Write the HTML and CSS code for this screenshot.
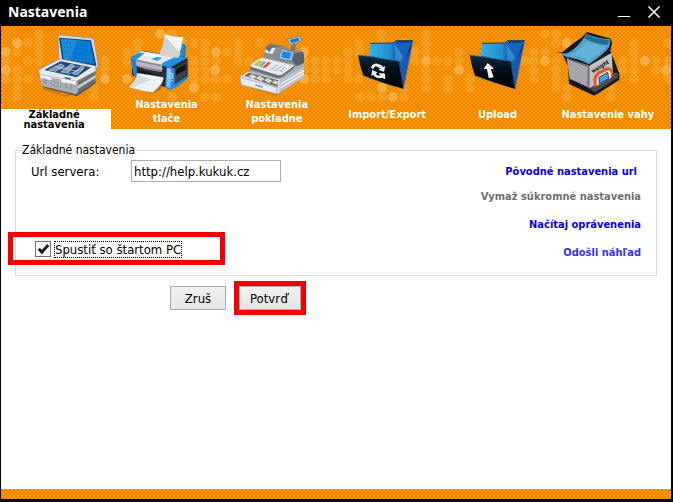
FILE: index.html
```html
<!DOCTYPE html>
<html lang="sk">
<head>
    <meta charset="UTF-8">
    <meta name="viewport" content="width=device-width, initial-scale=1.0">
    <title>Nastavenia</title>
    <link rel="stylesheet" href="styles.css">
</head>
<body>
    <div class="window">
        <header class="titlebar">
            <h1>Nastavenia</h1>
            <div class="window-buttons">
                <button type="button" aria-label="Minimalizovať">
                    <svg width="14" height="14" viewBox="0 0 14 14"><path d="M1 11.500h12" stroke="#fff" fill="none"/></svg>
                </button>
                <button type="button" aria-label="Zavrieť">
                    <svg width="14" height="14" viewBox="0 0 14 14"><path d="M1.500 1.500l11 11M12.500 1.500l-11 11" stroke="#fff" stroke-width="1.500" fill="none"/></svg>
                </button>
            </div>
        </header>

        <nav class="tabs">
            <svg class="dots" width="670" height="103" viewBox="1 26 670 103" aria-hidden="true">
                <path class="dim" d="M6 61h0M6 79h0M17 52h0M17 70h0M17 79h0M17 88h0M17 97h0M28 43h0M28 61h0M28 79h0M39 34h0M39 43h0M39 61h0M39 52h0M94 97h0M105 61h0M105 70h0M94 88h0M127 52h0M138 52h0M127 61h0M138 43h0M172 34h0M183 43h0M194 43h0M205 43h0M183 61h0M194 61h0M205 52h0M205 61h0M194 70h0M205 70h0M216 61h0M205 79h0M216 79h0M205 97h0M216 97h0M194 79h0M172 97h0M227 52h0M238 43h0M238 52h0M238 61h0M249 61h0M227 79h0M260 43h0M271 52h0M304 61h0M304 70h0M315 61h0M315 70h0M315 79h0M326 61h0M326 70h0M326 79h0M337 61h0M337 70h0M348 52h0M348 61h0M348 70h0M348 79h0M359 43h0M359 52h0M359 79h0M381 34h0M381 43h0M360 97h0M371 97h0M382 97h0M404 88h0M404 97h0M404 43h0M415 52h0M426 34h0M426 43h0M426 52h0M415 61h0M426 70h0M426 79h0M426 88h0M437 61h0M448 61h0M448 79h0M459 52h0M459 61h0M448 88h0M470 88h0M470 79h0M525 61h0M534 52h0M534 61h0M534 70h0M534 79h0M545 34h0M556 34h0M556 43h0M567 52h0M578 43h0M556 61h0M545 52h0M556 70h0M556 79h0M556 88h0M567 97h0M567 88h0M611 97h0M611 88h0M623 61h0M634 43h0M634 52h0M634 61h0M634 70h0M623 70h0M634 79h0M656 61h0M668 43h0M656 70h0M668 61h0M668 79h0"/>
                <path class="bright" d="M17 43h0M6 52h0M6 70h0M105 79h0M127 79h0M160 34h0M216 52h0M215 70h0M194 88h0M304 52h0M304 79h0M426 61h0M382 88h0M393 97h0M459 70h0M567 43h0M545 61h0M645 61h0M666 70h0"/>
            </svg>
            <a class="tab selected" href="#zakladne">
                <svg class="icon" viewBox="-42 0 240 216" aria-hidden="true">
                    <path d="M40 160l60 42 95-42-10 20-78 26-70-22z" fill="#9b6212" opacity=".5"/>
                    <path d="M84 27q0-6 7-6l93 9q7 1 8 6l13 77q0 8-9 7l-100-16q-8-2-9-10z" fill="#d6d9dd" stroke="#8d9399" stroke-width="2"/>
                    <path d="M90 29l93 8 16 74-2 3-100-17-10-68z" fill="#173f7c"/>
                    <path d="M94 32l86 8 14 68-93-14-9-59z" fill="#087bd1"/>
                    <path d="M94 32l48 4-22 60-19-2z" fill="#2396e0" opacity=".7"/>
                    <path d="M100 44l80 8M102 57l80 9M105 71l80 10M107 84l83 12" stroke="#0660ae" stroke-width="3" stroke-dasharray="4 6" opacity=".5"/>
                    <path d="M25 126l65-34 107 22 1 16-58 31-111-20z" fill="#e6e9ec" stroke="#858b92" stroke-width="2"/>
                    <path d="M43 126l49-26 91 18-43 30z" fill="#174b82"/>
                    <path d="M56 126l37-18 10 6-27 16zM92 132l30-23 11 3-19 23zM128 137l26-23 10 4-22 23zM74 115l67 15M84 123l62-8M112 139l49-17" fill="#8295a9" stroke="#c3cfda" stroke-width="2"/>
                    <path d="M28 138l111 20 58-30v32l-54 37q-5 3-12 1l-88-22q-8-3-10-10z" fill="#a9adb1"/>
                    <path d="M143 160l54-30v30l-54 37z" fill="#6c7074"/>
                    <path d="M29 140l109 20v10L32 151z" fill="#f0f1f2"/>
                    <path d="M143 173l54-32v8l-54 34z" fill="#c9cbcc"/>
                    <path d="M38 175l94 22q6 2 12-2l53-36v6l-56 40-94-25z" fill="#55585c"/>
                    <path d="M66 151l26 5v19l-26-6zM71 156v9l15 3v-9zM42 150v17M48 151v17M108 163v18M123 166v18" fill="#c9ccce" stroke="#74797e" stroke-width="2"/>
                    <path d="M104 149l18 4" stroke="#36577e" stroke-width="4"/>
                </svg>
                <span class="label">Základné nastavenia</span>
            </a>
            <a class="tab" href="#tlac">
                <svg class="icon" viewBox="20 0 240 216" aria-hidden="true">
                    <path d="M177 55l14-6q6 0 7 6l-2 31-30 14z" fill="#168fe0" stroke="#0b579b" stroke-width="2"/>
                    <path d="M38 87l28-16q4-2 9-1l121 16q9 2 9 8v48q0 6-6 9l-45 28q-4 3-10 1l-106-38z" fill="#2a2c31"/>
                    <path d="M37 85l30-15 54 7 80 13-51 26-38-6-73-16z" fill="#e6e8ec"/>
                    <path d="M37 85l22-11 18 2-29 21-11-3zM129 105l49-23 25 8-50 28-26-5z" fill="#1c91e5"/>
                    <path d="M65 82l14-7 53 9-12 8z" fill="#f8f9fa"/>
                    <path d="M96 93l16-7 17 3-15 10z" fill="#2ba5ec"/>
                    <path d="M137 18q27 12 56 8-7 35-17 63l-56-9q13-29 17-62z" fill="#f3f4f4" stroke="#a5a9ad"/>
                    <path d="M139 27l45 50-8 12-55-9z" fill="#cfd3d6"/>
                    <path d="M36 88q28 12 92 22v22Q72 126 44 111z" fill="#8d8993"/>
                    <path d="M46 99l83 17v10L48 112z" fill="#bbb7bf"/>
                    <path d="M36 88q-3 4-1 11l7 38q2 8 12 9l-4-50q-8-1-14-8z" fill="#2180de"/>
                    <path d="M53 124l83 23v16l-83-27z" fill="#111318"/>
                    <path d="M142 115l18 4q8 3 8 10v51l-18 6q-8-3-13-8z" fill="#2b88e6"/>
                    <path d="M143 119l12 4-2 57-11-4z" fill="#82c1f5"/>
                    <path d="M152 134l8 2v15l-8-2zM152 158h9" fill="#4ba7f0" stroke="#e2f4ff" stroke-width="2"/>
                    <path d="M166 123l35-22v40l-35 26z" fill="#3d4045"/>
                    <path d="M169 125l30-18v18l-30 17z" fill="#101114"/>
                    <path d="M166 168l38-24v8l-36 27z" fill="#1a89dc"/>
                    <path d="M54 135l79 13q1 18-32 45-35-3-73-15 23-20 26-43z" fill="#f1f2f4" stroke="#9ea1a7"/>
                    <path d="M57 139l39 16-54 23-13-1q22-18 28-38z" fill="#d8dce0"/>
                    <path d="M102 194l27-29-3 17-21 12z" fill="#8c5b1a" opacity=".6"/>
                </svg>
                <span class="label">Nastavenia tlače</span>
            </a>
            <a class="tab" href="#pokladna">
                <svg class="icon" viewBox="14 0 240 216" aria-hidden="true">
                    <path d="M26 171l107 33 85-65v-18L80 100z" fill="#99600f" opacity=".4"/>
                    <path d="M55 111l120-32 41 32v23l-84 47-79-21z" fill="#a9adb5"/>
                    <path d="M94 72l21-20 31-2 32 16 30 2q7 4 7 14v23l-27 12-64-18-30-14z" fill="#888d96"/>
                    <path d="M95 72l15-15 20 2-10 20z" fill="#e8e9ed"/>
                    <path d="M98 59l16-12 33 8-28 5-8 13z" fill="#6e747d"/>
                    <path d="M173 66l8-21 11 3-8 28z" fill="#757c86"/>
                    <path d="M165 34l38-10 5 15-34 11z" fill="#b2c8da" stroke="#69747f" stroke-width="2"/>
                    <path d="M173 36l25-7 3 9-24 7z" fill="#0877cf"/>
                    <path d="M148 62q19 8 36 8l-5 28q-24 0-40-7z" fill="#abc4dc" stroke="#5c6a7a" stroke-width="2"/>
                    <path d="M151 69q14 5 27 4l-5 19q-16 0-27-5z" fill="#168ce0"/>
                    <path d="M179 99l8-24 25-3 3 12v20l-20 10z" fill="#5b6068"/>
                    <path d="M56 108l25-17q5-3 14-1l90 21q-2 18-32 31-7 4-16 1l-76-23q-8-3-5-12z" fill="#e4e7ec" stroke="#9da2aa" stroke-width="2"/>
                    <path d="M54 116l78 24q12 4 20-2l33-24v7l-34 25q-10 6-20 3l-77-24z" fill="#697078"/>
                    <path d="M64 110l17-13 11 3-17 14z" fill="#e3b72c"/>
                    <path d="M78 114l16-14 8 2-15 15z" fill="#65b9a9"/>
                    <path d="M90 118l17-16 9 2-17 16z" fill="#f04c26"/>
                    <path d="M106 121l20-15 41 10-22 17z" fill="#fff"/>
                    <path d="M109 120l43 12M116 115l42 12M124 110l38 11M117 124l20-15M130 128l21-16M143 131l18-15" stroke="#989eaa" stroke-width="2"/>
                    <path d="M25 144l22-13 96 24v39q-4 4-12 3L28 171q-4-12-3-27z" fill="#d8dae2"/>
                    <path d="M36 143l13-9 89 23-3 20z" fill="#666b72"/>
                    <path d="M48 145l11-6 14 7-9 8zM70 151l11-8 16 9-9 8zM95 157l10-7 15 8-9 8zM118 163l10-6 10 4-5 10z" fill="#dad7c0"/>
                    <path d="M23 148l111 31q-3 12 0 18L29 171q-5-10-6-23z" fill="#e9ebf2" stroke="#a2a7b4" stroke-width="2"/>
                    <path d="M69 171l22 6" stroke="#888e99" stroke-width="4"/>
                    <path d="M143 155l72-39v31l-74 48z" fill="#bdc1ca"/>
                    <path d="M145 168l70-40M145 179l70-42" stroke="#f2f3f7" stroke-width="4"/>
                </svg>
                <span class="label">Nastavenia pokladne</span>
            </a>
            <a class="tab" href="#import">
                <svg class="icon" viewBox="-24 -12 240 216" aria-hidden="true">
                    <defs>
                        <linearGradient id="folder-back" x1="0" x2="1" y1="0" y2="0">
                            <stop offset="0" stop-color="#37b4e8"/>
                            <stop offset=".5" stop-color="#2090d0"/>
                            <stop offset=".72" stop-color="#123b91"/>
                            <stop offset="1" stop-color="#0b2c6b"/>
                        </linearGradient>
                        <linearGradient id="folder-front" x1="0" x2="0" y1="0" y2="1">
                            <stop offset="0" stop-color="#0b2e49"/>
                            <stop offset=".4" stop-color="#031019"/>
                            <stop offset="1" stop-color="#020508"/>
                        </linearGradient>
                    </defs>
                    <g id="folder">
                        <path d="M46 34l68-1 10-7h50l-29 146-110-50z" fill="url(#folder-back)"/>
                        <path d="M46 34l68-1 10-7h50" fill="none" stroke="#17435e" stroke-width="3"/>
                        <path d="M120 35l52-6-22 53-14 18-4-16z" fill="#176ec5" opacity=".8"/>
                        <path d="M119 36l25 38-8 14-15-3z" fill="#56bdf1" opacity=".45"/>
                        <path d="M170 40q-2 24-36 61l12 70z" fill="#1c62bb" opacity=".8"/>
                        <path d="M9 69l24 4q20-2 44 6l56 9q6 40 13 83-66-18-121-40Q15 104 9 69z" fill="url(#folder-front)"/>
                        <path d="M10 70q34 1 65 9l57 9 13 78" fill="none" stroke="#39657d" stroke-width="2"/>
                        <path d="M26 131q55 23 119 40l29-144" fill="none" stroke="#73899a" stroke-width="2" opacity=".8"/>
                    </g>
                    <path d="M48 107q5-14 20-12 12 2 17 10l6-3-4 17-17-5 5-4q-11-12-17-5l-3 7z" fill="#eee"/>
                    <path d="M88 122q-1 15-14 17-12 0-19-10l-6 3 2-18 17 7-6 4q10 12 17 1zM72 123l18 2 1 17-7-3-8-4z" fill="#eee"/>
                </svg>
                <span class="label">Import/Export</span>
            </a>
            <a class="tab" href="#upload">
                <svg class="icon" viewBox="-29 -12 240 216" aria-hidden="true">
                    <use href="#folder"/>
                    <path d="M63 93l19 17-10 1 9 25-15 2-5-27-10-1z" fill="#fff"/>
                </svg>
                <span class="label">Upload</span>
            </a>
            <a class="tab" href="#vaha">
                <svg class="icon" viewBox="53 0 240 216" aria-hidden="true">
                    <path d="M18 73l18-1 30-24 27-19 17-17 72 20 3 14-5 22 10 25 17 44v19l-75 47-76-35-3-54-18-39z" fill="#17191c"/>
                    <path d="M49 90l70 24-1 66-60-28z" fill="#a5a6aa"/>
                    <path d="M119 112l65-38 4 64-70 44z" fill="#c2c2c4"/>
                    <path d="M55 94l59 22-1 58" fill="none" stroke="#555a60" stroke-width="3"/>
                    <path d="M187 135l15-1 2 14-72 46-12-15z" fill="#4d4b4d"/>
                    <path d="M24 74q16 4 27 2Q88 56 107 17q35 15 74 17l-5 24q-22 26-60 51-28-16-68-22z" fill="#4da3cb"/>
                    <path d="M107 19q33 16 71 18l-7 14q-35-3-70-20z" fill="#226b96"/>
                    <path d="M61 82q34-20 47-42 33 12 61 14-27 30-54 44-23-12-54-16z" fill="#76bedc" opacity=".55"/>
                    <path d="M131 178l-2-24q2-15 16-24l21-11q15-5 20 6l2 19z" fill="#ed5624"/>
                    <path d="M139 173v-17q1-11 10-17l20-11q8-3 12 4l1 17z" fill="#f6eae0"/>
                    <path d="M147 167l-1-19 26-15 3 19z" fill="#4e9edb" stroke="#24435e" stroke-width="3"/>
                    <text class="weight" x="127" y="136" transform="rotate(-31 127 136)">weight</text>
                </svg>
                <span class="label">Nastavenie vahy</span>
            </a>
        </nav>

        <main class="content">
            <form>
                <fieldset id="zakladne">
                    <legend>Základné nastavenia</legend>
                    <div class="fields">
                        <div class="field">
                            <label for="url">Url servera:</label>
                            <input type="text" id="url" value="http://help.kukuk.cz">
                        </div>
                        <div class="check marked">
                            <input type="checkbox" id="autostart" checked>
                            <label for="autostart">Spustiť so štartom PC</label>
                        </div>
                    </div>
                    <div class="links">
                        <a class="default-url" href="#url">Pôvodné nastavenia url</a>
                        <a class="clear" href="#vymaz">Vymaž súkromné nastavenia</a>
                        <a href="#nacitaj">Načítaj oprávenenia</a>
                        <a class="send" href="#nahlad">Odošli náhľad</a>
                    </div>
                </fieldset>
                <div class="buttons">
                    <button type="button">Zruš</button>
                    <div class="marked"><button type="button">Potvrď</button></div>
                </div>
            </form>
        </main>
        <footer class="strip"></footer>
    </div>
</body>
</html>
```

FILE: styles.css
```css
*,
*::before,
*::after {
    box-sizing: border-box;
}
body {
    margin: 0;
    background-color: black;
    color: black;
    font-family: "DejaVu Sans Condensed", "DejaVu Sans", sans-serif;
    font-size: 13px;
}
.window {
    display: flex;
    flex-direction: column;
    min-height: 100vh;
    padding: 0 2px 3px 1px;
}
.titlebar {
    display: flex;
    justify-content: space-between;
    align-items: center;
    height: 26px;
    padding: 0 10px 2px 7px;
    color: white;
}
.titlebar h1 {
    margin: 0;
    font-family: "Noto Sans", sans-serif;
    font-size: 14px;
    line-height: 20px;
}
.window-buttons {
    display: flex;
    gap: 16px;
}
.window-buttons button {
    display: flex;
    padding: 0;
    border: 0;
    background: none;
}
.tabs,
.strip {
    background: repeating-conic-gradient(#ff9900 0 25%, #e88400 0 50%) 0 0 / 4px 4px;
}
.tabs {
    position: relative;
    display: flex;
    height: 103px;
    padding-right: 8px;
    overflow: hidden;
}
.dots {
    position: absolute;
    top: 0;
    left: 0;
}
.dots path {
    fill: none;
    stroke: #ffd9a0;
    stroke-width: 10;
    stroke-linecap: round;
}
.dots .dim {
    opacity: 0.2;
}
.dots .bright {
    opacity: 0.42;
}
.tab {
    position: relative;
    display: flex;
    flex: 1;
    flex-direction: column;
    align-items: center;
    color: white;
    font-size: 11px;
    font-weight: bold;
    line-height: 14px;
    text-align: center;
    text-decoration: none;
}
.icon {
    flex: none;
    width: 80px;
    height: 72px;
    margin-top: 2px;
    margin-bottom: -2px;
    overflow: visible;
}
.label {
    display: flex;
    align-items: center;
    justify-content: center;
    height: 28px;
    max-width: 80px;
}
.tab:nth-last-child(-n+3) .label {
    align-items: flex-end;
    height: 24px;
    max-width: none;
    white-space: nowrap;
}
.selected .label {
    width: 100%;
    max-width: none;
    height: 20px;
    margin-top: auto;
    padding: 1px 16px 0 12px;
    background-color: white;
    color: black;
    line-height: 10px;
}
.weight {
    font-family: "DejaVu Sans Condensed", "DejaVu Sans", sans-serif;
    font-size: 17px;
    font-weight: bold;
    fill: #15171a;
}
.content {
    flex: 1;
    padding: 14px 14px 20px;
    background-color: white;
}
fieldset {
    display: flex;
    justify-content: space-between;
    margin: 0;
    padding: 2px 15px 15px 14px;
    border: 1px solid #dcdcdc;
}
legend {
    margin-left: -9px;
    padding: 0 1px;
    font-size: 12px;
    line-height: 15px;
}
.fields {
    display: flex;
    flex-direction: column;
    justify-content: space-between;
    padding-bottom: 3px;
}
.field {
    display: flex;
    align-items: center;
}
.field label {
    width: 101px;
    padding-left: 1px;
}
.field input {
    width: 150px;
    height: 22px;
    padding: 0 2px;
    border: 1px solid #abadb3;
    font: inherit;
}
.check {
    position: relative;
    display: flex;
    align-items: center;
    gap: 4px;
    padding-left: 5px;
}
.check input {
    display: grid;
    place-items: center;
    appearance: none;
    width: 16px;
    height: 16px;
    margin: 0;
    border: 1px solid #707070;
    background-color: white;
}
.check input:checked::before {
    content: "";
    width: 11px;
    height: 6px;
    margin-top: -3px;
    border: solid #212121;
    border-width: 0 0 3px 3px;
    transform: rotate(-48deg);
}
.check label {
    outline: 1px dotted black;
    line-height: 15px;
}
.check.marked::after {
    content: "";
    position: absolute;
    top: -9px;
    left: -22px;
    width: 217px;
    height: 33px;
    border: 5px solid #f40000;
    pointer-events: none;
}
.links {
    display: flex;
    flex-direction: column;
    align-items: flex-end;
    gap: 13px;
    padding-top: 4px;
    font-size: 11px;
    font-weight: bold;
    line-height: 15px;
}
.links a {
    color: #0000f8;
    text-decoration: none;
}
.links .default-url {
    padding-right: 4px;
}
.links .clear {
    margin-top: -3px;
    color: #707070;
}
.links .send {
    color: #3333f5;
}
.buttons {
    display: flex;
    align-items: center;
    gap: 8px;
    padding: 5px 0 0 155px;
}
.buttons button {
    height: 24px;
    min-width: 56px;
    padding: 0 10px;
    border: 1px solid #acacac;
    background: linear-gradient(#f0f0f0, #e5e5e5);
    color: black;
    font: inherit;
}
.buttons .marked {
    display: flex;
    border: 5px solid #f40000;
}
.buttons .marked button {
    min-width: 62px;
    padding-right: 12px;
}
.strip {
    height: 10px;
}
```
